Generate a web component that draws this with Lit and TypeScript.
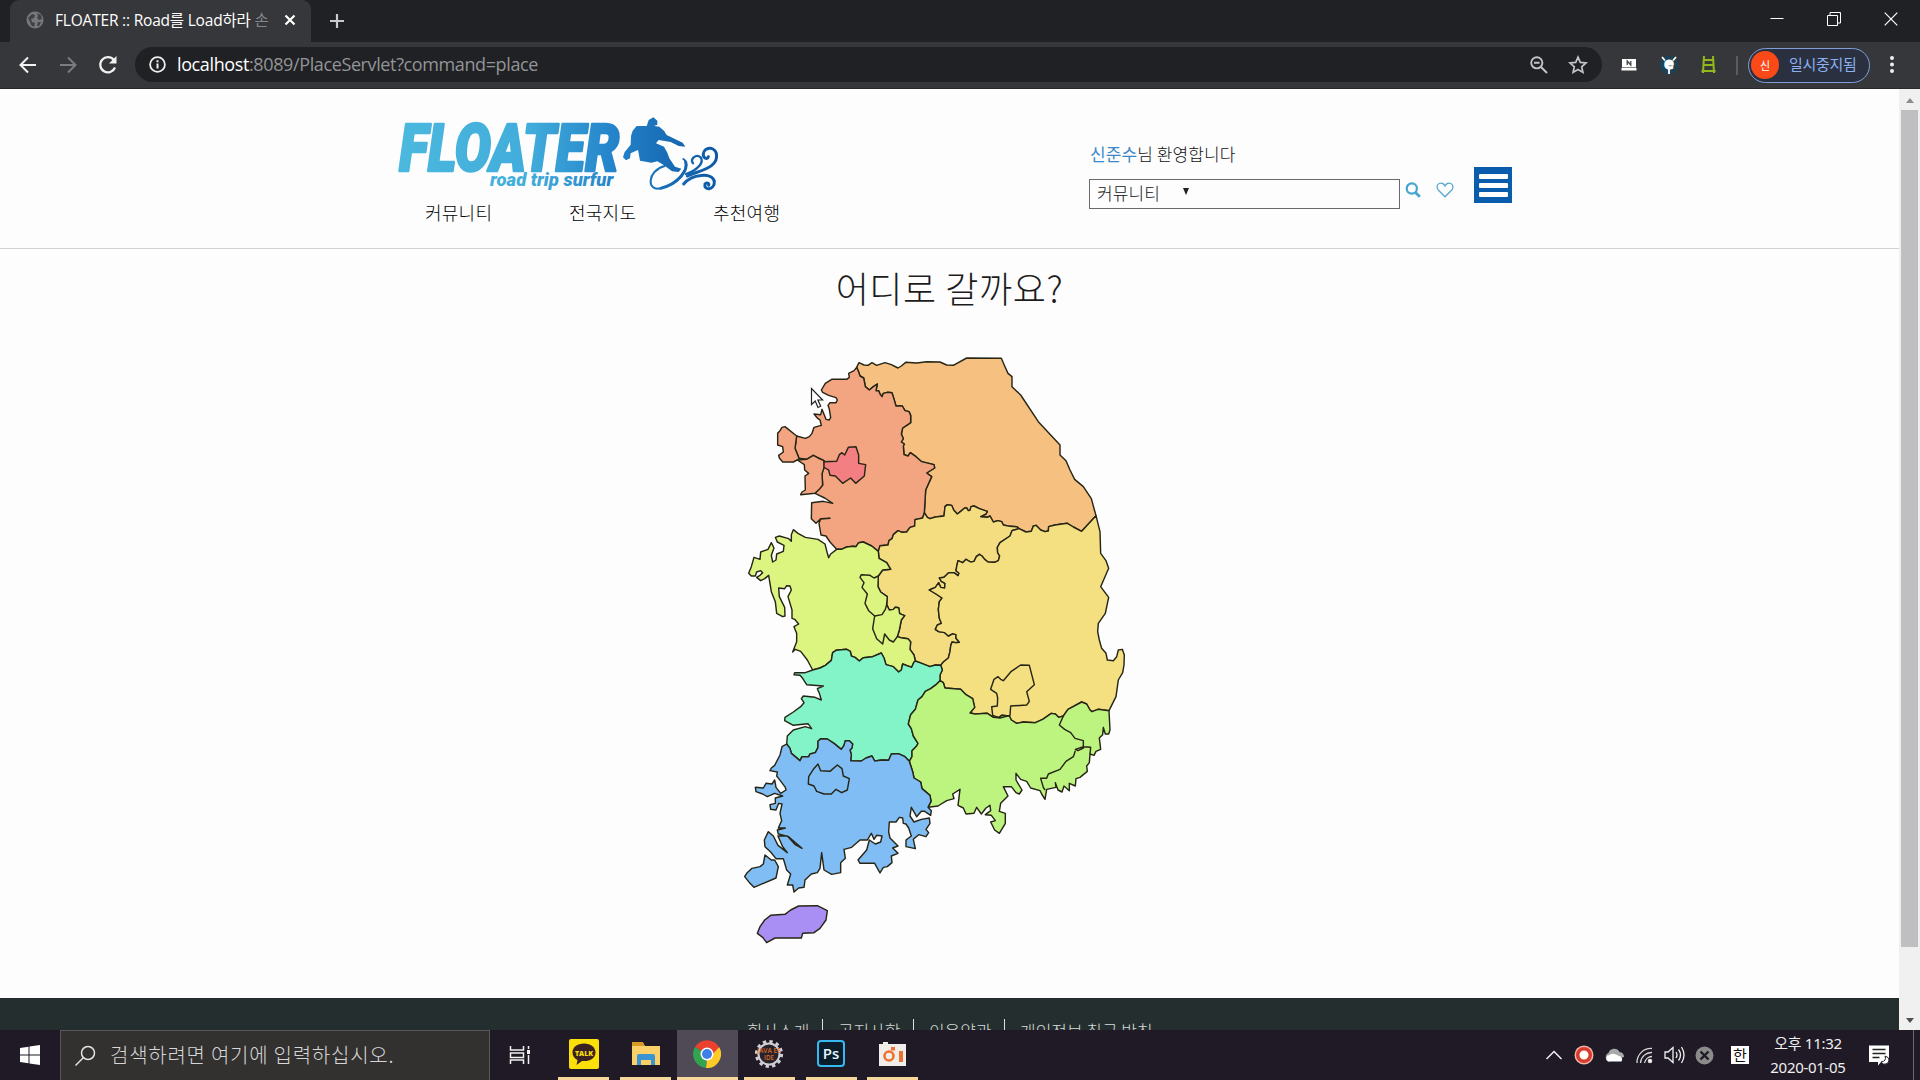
import { LitElement, html, svg, css } from "lit";
import { customElement } from "lit/decorators.js";

/* ---------- map geometry: map units are thirds of a pixel ---------- */
const flip = (s: string) => s.trim().split(/\s+/).reverse().join(" ");
const poly = (...parts: string[]) => "M" + parts.join(" ") + "Z";

// Borders shared by two provinces
const GG_GW = "583,518 587,450 605,410 590,399 614,384 612,374 575,365 558,350 541,338 534,348 522,344 520,318 523,312 514,306 520,296 514,282 518,264 530,256 542,248 542,226 537,215 525,212 517,198 498,198 494,184 486,158 472,157 460,160 456,170 450,162 446,152 438,152 442,132 430,140 418,150 406,140 401,114 390,108 386,96 380,82";
const GG_CN = "320,628 334,628 350,621 370,619 378,620 386,608 400,606 425,618 445,634";
const GG_CB = "445,634 450,617 474,615 477,602 486,596 490,584 504,572 516,577 530,576 540,562 554,558 555,539 578,534 583,518";
const GW_CB = "583,518 592,532 600,536 616,531 642,528 645,500 652,494 665,496 671,510 682,522 692,514 704,504 710,504 715,512 720,511 723,500 732,498 748,506 772,514 768,522 752,530 772,532 780,528 790,546 804,542 815,545 820,555 840,559 860,560 867,566";
const GW_GB = "867,566 888,576 904,574 910,558 918,556 932,570 945,575 955,573 956,560 975,555 1012,550 1030,561 1055,574 1098,527";
const CB_CN = "445,634 447,655 470,668 482,688 458,690 445,708 444,740 452,756 472,770 470,794 478,810 490,808 496,802 506,803 509,821 524,827 514,840 508,870 502,890 512,893 534,896 542,906 540,928 552,945 556,963";
const CB_JB = "556,963 575,970 600,980 616,975 632,976";
const CB_GB = "867,566 852,570 846,572 840,588 810,608 802,622 803,638 809,648 805,662 794,667 774,666 764,658 756,648 748,643 739,650 732,664 722,666 708,658 698,668 684,662 680,680 678,692 687,700 684,707 672,698 656,698 642,712 628,714 634,724 645,730 644,744 632,742 626,728 616,742 598,750 618,762 636,774 628,785 625,808 628,835 634,850 622,855 616,868 626,875 644,878 655,888 668,881 678,884 678,895 688,907 677,908 666,906 662,918 660,935 655,954 640,966 632,976";
const CN_JB = "248,990 270,984 286,976 304,961 308,938 318,931 350,928 361,934 364,948 375,952 388,963 400,953 428,950 454,939 462,954 468,974 490,980 506,996 514,990 518,972 545,982 552,966 556,963";
const JB_GB = "632,976 637,990 630,1005 630,1022";
const JB_GN = "630,1022 618,1034 602,1046 586,1054 576,1070 564,1080 556,1108 542,1124 535,1152 544,1166 550,1188 564,1210 560,1218 546,1232 546,1250 538,1264";
const JB_JN = "170,1212 180,1225 184,1240 210,1262 216,1250 236,1250 240,1242 256,1238 264,1222 264,1204 272,1196 292,1197 312,1210 334,1228 342,1216 346,1202 358,1202 368,1212 366,1224 360,1230 364,1244 362,1262 394,1263 408,1254 426,1248 434,1263 456,1260 476,1261 484,1242 505,1241 525,1250 538,1264";
const JN_GN = "538,1264 548,1295 552,1314 572,1326 576,1346 600,1366 603,1384 594,1402";
const GB_GN = "630,1022 640,1028 645,1044 692,1048 708,1064 728,1076 734,1102 720,1119 736,1122 772,1120 790,1132 806,1133 815,1126 838,1128 844,1140 860,1150 880,1146 916,1148 938,1138 964,1120 976,1122 986,1132 1000,1128 1014,1108 1055,1086 1070,1092 1080,1110 1086,1115 1104,1108 1137,1112";

const REGIONS = [
  { name: "강원", color: "#f5c080", d: poly(GG_GW, "387,68 402,75 414,76 426,68 440,76 465,68 484,74 504,84 514,78 527,67 560,69 590,65 630,66 650,75 670,76 710,54 814,55 824,78 834,100 846,110 846,140 872,165 925,245 990,315 990,345 1008,362 1020,390 1034,418 1060,440 1084,476 1098,527", flip(GW_GB), flip(GW_CB)) },
  { name: "경기", color: "#f3a481", d: poly("380,82 372,92 356,100 358,112 350,118 305,118 286,130 274,150 278,157 296,166 318,173 322,180 318,188 300,188 294,196 298,208 302,232 298,240 288,238 276,208 272,224 252,222 264,236 270,240 274,256 252,262 246,280 238,290 226,295 200,288 195,325 207,355 230,358 250,346 282,362 276,400 278,435 255,460 284,474 308,490 280,484 262,486 245,488 244,536 258,550 272,536 300,535 272,537 267,550 273,585 288,588 300,606 320,628", GG_CN, GG_CB, GG_GW) },
  { name: "강화", color: "#f3a481", d: poly("200,288 165,260 156,262 150,272 143,280 143,315 158,320 160,336 146,346 148,354 158,366 190,366 205,358 207,355 195,325") },
  { name: "인천", color: "#f3a481", d: poly("202,360 230,358 250,346 264,354 282,362 283,380 276,402 278,435 268,448 255,460 212,464 216,456 226,450 225,408 236,400 224,390 223,374") },
  { name: "서울", color: "#f37f82", d: poly("282,365 320,364 328,344 336,338 344,345 355,322 378,320 386,345 386,370 407,374 403,408 377,430 362,414 338,430 316,408 300,406 296,390 282,382") },
  { name: "충북", color: "#f4dc80", d: poly(GW_CB, CB_GB, flip(CB_JB), flip(CB_CN), GG_CB) },
  { name: "경북", color: "#f4e080", d: poly(GW_GB, "1110,575 1112,640 1128,662 1136,685 1112,740 1136,772 1126,820 1105,850 1103,875 1108,900 1115,925 1128,940 1132,960 1150,962 1160,950 1165,930 1177,928 1183,945 1182,975 1178,998 1165,1020 1158,1070 1137,1112", flip(GB_GN), flip(JB_GB), flip(CB_GB)) },
  { name: "충남", color: "#dcf480", d: poly(GG_CN, CB_CN, flip(CN_JB), "232,960 212,934 196,928 188,936 200,905 200,880 192,860 206,852 194,838 186,835 186,810 174,770 184,750 180,738 170,737 164,746 146,744 148,770 164,802 165,828 158,830 140,820 136,785 124,755 116,706 104,716 92,722 80,712 90,706 98,698 92,692 80,696 76,708 64,708 56,700 64,680 72,652 90,658 92,636 114,628 124,608 132,624 124,646 128,666 138,660 140,642 160,634 162,616 142,606 136,592 148,588 176,596 184,604 184,584 190,569 204,580 226,592 264,598 285,612 292,640 296,653 302,642") },
  { name: "전북", color: "#82f4c8", d: poly(CN_JB, CB_JB, JB_GB, JB_GN, flip(JB_JN), "172,1188 190,1170 226,1160 245,1166 234,1151 190,1156 164,1142 165,1132 190,1116 212,1100 222,1088 214,1076 220,1068 255,1072 274,1080 268,1060 262,1046 280,1038 230,1034 218,1015 210,1006 192,1004 194,998 226,998") },
  { name: "경남", color: "#bdf480", d: poly(GB_GN, "1140,1170 1136,1182 1126,1182 1120,1162 1118,1184 1108,1194 1112,1228 1098,1234 1092,1246 1080,1242 1078,1268 1070,1278 1072,1294 1050,1312 1038,1316 1036,1338 1018,1330 1018,1352 1002,1338 996,1356 984,1350 976,1328 978,1342 950,1348 945,1378 935,1362 930,1352 902,1344 890,1324 872,1318 858,1300 858,1320 876,1350 868,1362 858,1358 844,1340 820,1340 834,1368 812,1390 808,1414 826,1420 826,1450 808,1480 794,1470 782,1446 796,1442 784,1426 766,1424 782,1412 780,1396 768,1404 754,1422 740,1402 732,1420 708,1422 700,1404 684,1396 690,1348 668,1362 672,1376 650,1382 624,1398 594,1402", flip(JN_GN), flip(JB_GN)) },
  { name: "전남", color: "#80bdf4", d: poly(JB_JN, JN_GN, "604,1412 602,1426 584,1414 574,1414 560,1430 544,1402 540,1428 552,1446 574,1438 598,1434 600,1450 588,1468 596,1478 588,1490 566,1484 550,1498 556,1526 528,1520 528,1500 544,1488 536,1464 528,1452 520,1450 518,1434 508,1432 498,1446 478,1446 476,1476 480,1494 504,1518 488,1524 504,1540 484,1548 486,1568 472,1580 460,1582 450,1599 434,1570 390,1570 384,1560 410,1530 418,1500 436,1512 452,1506 456,1488 440,1486 432,1498 424,1480 412,1500 390,1500 365,1522 342,1528 346,1555 332,1568 332,1598 305,1603 282,1590 275,1538 270,1585 262,1598 244,1602 225,1620 222,1642 206,1644 192,1656 188,1635 172,1635 182,1602 170,1590 160,1556 138,1556 122,1536 105,1520 103,1500 115,1475 130,1488 144,1516 172,1538 158,1520 144,1488 172,1488 196,1514 216,1525 194,1506 176,1490 145,1482 142,1470 166,1464 145,1464 155,1442 150,1420 156,1392 146,1390 138,1410 122,1408 120,1394 136,1390 136,1374 158,1368 134,1360 112,1370 98,1362 78,1355 76,1342 100,1344 108,1330 126,1332 134,1320 138,1342 152,1360 168,1350 166,1342 148,1318 140,1308 142,1296 120,1292 124,1284 134,1276 150,1245 156,1220") },
  { name: "진도", color: "#80bdf4", d: poly("105,1545 124,1560 134,1560 145,1580 138,1614 72,1642 60,1630 44,1610 50,1600 66,1585 90,1580 100,1572") },
  { name: "제주", color: "#a98ff4", d: poly("82,1780 90,1760 104,1740 122,1726 165,1723 182,1710 206,1698 262,1697 292,1712 288,1740 270,1765 252,1778 218,1780 214,1794 135,1794 110,1808 98,1792") },
];
const INNER = [
  "M470,794 466,808 456,824 434,828 416,812 405,790 412,762 396,742 402,728 390,712 394,704 420,706 432,714 445,708",
  "M434,828 428,866 440,896 458,912 464,882 478,900 490,906 502,890",
  "M785,1100 788,1126 810,1134 840,1126 842,1098 890,1095 898,1084 890,1055 913,1034 898,976 872,975 844,994 820,1022 812,1018 804,1010 792,1018 782,1048 800,1060 803,1074 802,1098Z",
  "M264,1272 272,1292 300,1294 322,1275 336,1286 340,1308 358,1316 352,1350 335,1358 318,1348 304,1362 282,1362 260,1354 252,1338 235,1332 236,1310 250,1288Z",
  "M1000,1128 988,1155 1004,1168 1022,1178 1035,1195 1060,1202 1060,1224 1044,1232 1036,1228 1060,1220 1082,1222 1080,1242",
  "M1036,1232 1030,1250 1008,1264 990,1288 955,1302 950,1315 932,1315 940,1342 945,1350",
];

@customElement("korea-map")
export class KoreaMap extends LitElement {
  static styles = css`
    :host { display: block; width: 400px; height: 610px; }
    svg { display: block; }
    .line { stroke: #272616; stroke-width: 4.3; stroke-linejoin: round; }
  `;
  render() {
    return html`<svg width="400" height="610" viewBox="0 0 1200 1830">
      ${REGIONS.map((r) => svg`<path class="line" fill=${r.color} d=${r.d} aria-label=${r.name}></path>`)}
      ${INNER.map((d) => svg`<path class="line" fill="none" d=${d}></path>`)}
    </svg>`;
  }
}

@customElement("browser-bar")
export class BrowserBar extends LitElement {
  static styles = css`
    :host { display: block; height: 89px; background: #202124; color: #fff; font-family: "Noto Sans", "Noto Sans CJK KR", sans-serif; }
    svg { display: block; fill: none; flex: none; }
    .strip { display: flex; height: 42px; align-items: center; padding-left: 10px; }
    .tab { box-sizing: border-box; width: 301px; height: 42px; background: #36373a; border-radius: 9px 9px 0 0; display: flex; align-items: center; padding: 0 15px 2px 16px; }
    .title { width: 222px; margin-left: 11px; white-space: nowrap; font: 400 15.5px "Open Sans", "Noto Sans CJK KR", sans-serif; letter-spacing: -0.2px; padding-bottom: 2px; }
    .faded { color: #85868a; }
    .close { margin-left: auto; }
    .plus { margin-left: 18px; }
    .win { display: flex; margin-left: auto; gap: 43px; padding-right: 22px; align-items: center; padding-bottom: 5px; }
    .tools { display: flex; height: 47px; background: #36373a; box-sizing: border-box; border-bottom: 1px solid #28292b; align-items: center; padding: 0 19px 0 18px; }
    .nav { display: flex; gap: 20px; width: 117px; }
    .omni { width: 1467px; height: 35px; background: #202124; border-radius: 18px; display: flex; align-items: center; box-sizing: border-box; padding: 0 14px; margin-bottom: 1px; }
    .url { margin-left: 11px; font: 400 18px "Open Sans", sans-serif; color: #929497; white-space: nowrap; letter-spacing: -0.38px; padding-bottom: 1px; }
    .host { color: #fff; }
    .mag { margin-left: auto; margin-right: 19px; }
    .ext { display: flex; gap: 20px; margin-left: 17px; }
    .e { font: 800 16px "Open Sans", sans-serif; }
    .sep { width: 2px; height: 19px; background: #5b5c60; margin: 0 10px 0 17px; }
    .pill { width: 122px; height: 35px; box-sizing: border-box; border: 1.5px solid #7f9fd6; background: #2b3040; border-radius: 18px; display: flex; align-items: center; gap: 10px; padding-left: 2px; color: #8ab0f0; font-size: 15px; white-space: nowrap; letter-spacing: -0.3px; }
    .label { padding-bottom: 3px; }
    .face { width: 28px; height: 28px; border-radius: 50%; background: #fb4a18; color: #fff; font-size: 11px; display: flex; align-items: center; justify-content: center; }
    .dots { margin-left: 19px; }
  `;
  render() {
    return html`
      <div class="strip">
        <div class="tab">
          <svg width="18" height="18" viewBox="0 0 18 18"><circle cx="9" cy="9" r="8.5" fill="#77787c"/><path d="M2 7l4-4 3 1-1 3-3 1 1 3 3 1-1 4-3-2-1-3zM11 2l4 2 1 4-3 1-2-2 1-2zM12 11l3 0-2 4-2 0z" fill="#404145"/></svg>
          <div class="title">FLOATER :: Road를 Load하라 <span class="faded">손</span></div>
          <svg class="close" width="12" height="12" viewBox="0 0 12 12" stroke="#fff" stroke-width="2.2"><path d="M1.5 1.5l9 9M10.500 1.5l-9 9"/></svg>
        </div>
        <svg class="plus" width="16" height="16" viewBox="0 0 16 16" stroke="#c9cacd" stroke-width="2.2"><path d="M8 1v14M1 8h14"/></svg>
        <div class="win">
          <svg width="14" height="14" viewBox="0 0 14 14" stroke="#fff"><path d="M.5 6.500h13"/></svg>
          <svg width="14" height="14" viewBox="0 0 14 14" stroke="#fff"><path d="M.5 3.500h10v10h-10zM3 3.500v-3h10.500v10.500h-3"/></svg>
          <svg width="14" height="14" viewBox="0 0 14 14" stroke="#fff" stroke-width="1.2"><path d="M.7.7l12.600 12.600M13.300.7L.7 13.300"/></svg>
        </div>
      </div>
      <div class="tools">
        <div class="nav">
          <svg width="20" height="20" viewBox="0 0 20 20" stroke="#f2f2f2" stroke-width="2"><path d="M18 10H3M10 2.500L2.500 10l7.500 7.500"/></svg>
          <svg width="20" height="20" viewBox="0 0 20 20" stroke="#7b7c80" stroke-width="2"><path d="M2 10h15M10 2.500l7.500 7.500-7.500 7.500"/></svg>
          <svg width="20" height="20" viewBox="0 0 20 20"><path d="M17 12.500A7.600 7.600 0 1 1 15.800 5" stroke="#f2f2f2" stroke-width="2.200"/><path d="M18.500 1v7.500h-7.500z" fill="#f2f2f2"/></svg>
        </div>
        <div class="omni">
          <svg width="17" height="17" viewBox="0 0 17 17"><circle cx="8.500" cy="8.500" r="7.400" stroke="#eee" stroke-width="1.800"/><path d="M8.500 7.500v5M8.500 4.300v2" stroke="#eee" stroke-width="2"/></svg>
          <div class="url"><span class="host">localhost</span>:8089/PlaceServlet?command=place</div>
          <svg class="mag" width="20" height="20" viewBox="0 0 20 20" stroke="#c3c4c7" stroke-width="1.900"><circle cx="7.800" cy="7.800" r="5.600"/><path d="M12 12l6 6M5 7.800h5.600"/></svg>
          <svg width="20" height="20" viewBox="0 0 20 20" stroke="#c3c4c7" stroke-width="1.700"><path d="M10 2.200l2.300 5.200 5.700.6-4.300 3.800 1.200 5.600-4.900-2.900-4.900 2.900 1.200-5.600L2 8l5.700-.6z"/></svg>
        </div>
        <div class="ext">
          <svg width="20" height="20" viewBox="0 0 20 20"><path d="M3 4h14v8H3zM2.500 13h15v2.500h-15z" fill="#fff"/><path d="M3 12.500h14" stroke="#888"/><path d="M8.200 10V6l3.600 4V6" stroke="#444" stroke-width="1.300"/></svg>
          <svg width="20" height="20" viewBox="0 0 20 20"><circle cx="10" cy="10" r="9.500" fill="#1e4253"/><path d="M3 2l3 3.500M17 2l-3 3.500M10 14v5" stroke="#fff" stroke-width="1.800"/><text class="e" x="10" y="14" text-anchor="middle" fill="#fff" stroke="#fff" stroke-width=".8">e</text></svg>
          <svg width="20" height="20" viewBox="0 0 20 20" stroke="#94b81c" stroke-width="2"><path d="M5 1L4 18M14 1l1 17M4.500 5h10M4 10h11M2.500 16h14"/></svg>
        </div>
        <div class="sep"></div>
        <div class="pill"><div class="face">신</div><span class="label">일시중지됨</span></div>
        <svg class="dots" width="6" height="20" viewBox="0 0 6 20"><circle cx="3" cy="3" r="2" fill="#eee"/><circle cx="3" cy="9.500" r="2" fill="#eee"/><circle cx="3" cy="16" r="2" fill="#eee"/></svg>
      </div>`;
  }
}

@customElement("site-page")
export class SitePage extends LitElement {
  static styles = css`
    :host { display: flex; height: 941px; overflow: hidden; background: #fdfdfd; color: #222; font-family: "Noto Sans CJK KR", sans-serif; }
    svg { display: block; flex: none; overflow: visible; }
    .page { width: 1899px; flex: none; height: 941px; overflow: hidden; display: flex; flex-direction: column; }
    header { height: 160px; box-sizing: border-box; border-bottom: 1px solid #d3d3d6; display: flex; padding-left: 400px; flex: none; }
    .brand { width: 689px; padding-top: 27px; }
    nav { display: flex; padding: 8px 0 0 25px; gap: 77px; font-size: 18px; font-weight: 300; line-height: 26px; letter-spacing: 0.25px; }
    nav span { width: 67px; white-space: nowrap; color: #000; }
    .find { width: 311px; padding-top: 53px; }
    .hello { font-size: 17px; line-height: 24px; font-weight: 300; padding-left: 1px; color: #111; letter-spacing: 0.1px; }
    .hello b { font-weight: 400; color: #3c87c9; }
    .box { margin-top: 13px; box-sizing: border-box; height: 30px; border: 1px solid #68686e; display: flex; align-items: center; padding: 0 0 3px 7px; font-size: 17px; font-weight: 300; color: #111; letter-spacing: 0.1px; }
    .arrow { margin: 0 0 2px 23px; width: 0; height: 0; border: 3.5px solid transparent; border-top: 7px solid #222; border-bottom: 0; }
    .acts { display: flex; align-items: flex-start; padding: 93px 0 0 5px; gap: 15px; }
    .menu { width: 38px; height: 36px; background: #0a5cad; margin: 78px 0 0 20px; display: flex; flex-direction: column; align-items: center; justify-content: center; gap: 4px; }
    .menu i { width: 29px; height: 5px; background: #fff; border-radius: 1px; }
    main { height: 749px; display: flex; flex-direction: column; align-items: center; flex: none; }
    h1 { margin: 10px 0 0; font-size: 36px; font-weight: 300; line-height: 56px; height: 56px; color: #1c1c1c; letter-spacing: 0.6px; }
    korea-map { margin: 25px 39px 0 0; width: 400px; }
    footer { flex: none; height: 60px; background: #252e2e; color: #d8dada; display: flex; justify-content: center; padding: 21px 2px 0 0; font-size: 17px; font-weight: 300; line-height: 24px; }
    footer span { padding: 0 12.5px 0 15px; border-right: 1.5px solid #e0e0e0; height: 19px; }
    footer span:last-child { border: 0; }
    .scroll { flex: none; width: 21px; background: #f0f0f0; display: flex; flex-direction: column; align-items: center; }
    .up { margin-top: 9px; border: 4.5px solid transparent; border-bottom: 5px solid #8c8c8c; border-top: 0; }
    .thumb { width: 17px; height: 837px; background: #bfbfc1; margin-top: 7px; }
    .down { margin-top: auto; margin-bottom: 7px; border: 4.5px solid transparent; border-top: 5px solid #505050; border-bottom: 0; }
    .word { font: italic 900 202px Roboto, sans-serif; }
    .tag { font: italic 900 56px Roboto, sans-serif; }
  `;
  render() {
    return html`
      <div class="page">
        <header>
          <div class="brand">
            <svg width="320" height="75" viewBox="60 48 960 225">
              <defs>
                <linearGradient id="g" gradientUnits="userSpaceOnUse" x1="60" y1="0" x2="1020" y2="0"><stop offset="0" stop-color="#4bb8de"/><stop offset=".4" stop-color="#42addb"/><stop offset=".65" stop-color="#2686cb"/><stop offset="1" stop-color="#0c57a3"/></linearGradient>
              </defs>
              <g fill="url(#g)">
                <text class="word" x="58" y="213" textLength="660" lengthAdjust="spacingAndGlyphs" stroke="url(#g)" stroke-width="8" stroke-linejoin="round">FLOATER</text>
                <text class="tag" x="330" y="258" textLength="370" lengthAdjust="spacingAndGlyphs">road trip surfur</text>
                <path d="M803 70L806 60 820 52 832 62 832 74 822 78 838 80 852 92 860 105 908 128 916 140 896 138 872 126 836 120 828 130 852 140 862 158 868 175 885 200 904 206 896 216 876 214 850 194 832 184 814 188 780 182 774 150 752 160 750 175 738 181 729 172 734 156 752 134 753 108 758 92 770 78 800 78Z"/>
              </g>
              <g fill="none" stroke="url(#g)" stroke-linecap="round" stroke-width="6">
                <path d="M854 198C800 212 800 276 842 265C896 252 938 196 910 177" />
                <path d="M842 265C896 252 925 210 917 186" stroke-width="9"/>
                <path d="M918 222C945 214 975 190 962 172C948 160 928 178 939 190" stroke-width="7"/>
                <path d="M922 228C955 212 1018 205 1009 160C1000 134 964 144 971 170C976 178 984 176 985 170" stroke-width="9"/>
                <path d="M911 252C935 222 996 216 1003 244C1004 272 970 272 975 252C980 246 988 250 986 256" stroke-width="9"/>
              </g>
            </svg>
            <nav><span>커뮤니티</span><span>전국지도</span><span>추천여행</span></nav>
          </div>
          <div class="find">
            <div class="hello"><b>신준수</b>님 환영합니다</div>
            <div class="box">커뮤니티<div class="arrow"></div></div>
          </div>
          <div class="acts">
            <svg width="16" height="16" viewBox="0 0 16 16" fill="none" stroke="#46a5cf"><circle cx="6.800" cy="6.500" r="5.100" stroke-width="2.200"/><path d="M10.500 10.500l4.300 4.300" stroke-width="2.800"/></svg>
            <svg width="18" height="16" viewBox="0 0 18 16" fill="none" stroke="#58a8cf" stroke-width="1.300"><path d="M9 14.800L2.200 8C.2 5.500 1 2.500 3.200 1.500 5.500.600 7.800 1.600 9 4 10.200 1.600 12.500.600 14.800 1.500 17 2.500 17.800 5.500 15.800 8z"/></svg>
          </div>
          <div class="menu"><i></i><i></i><i></i></div>
        </header>
        <main>
          <h1>어디로 갈까요?</h1>
          <korea-map></korea-map>
        </main>
        <footer><span>회사소개</span><span>공지사항</span><span>이용약관</span><span>개인정보 취급 방침</span></footer>
      </div>
      <div class="scroll"><div class="up"></div><div class="thumb"></div><div class="down"></div></div>`;
  }
}

@customElement("task-bar")
export class TaskBar extends LitElement {
  static styles = css`
    :host { display: flex; height: 50px; background: #1f1a26; color: #f0f0f0; align-items: stretch; font-family: "Noto Sans", "Noto Sans CJK KR", sans-serif; }
    svg { display: block; flex: none; fill: none; }
    .start { width: 60px; display: flex; align-items: center; justify-content: center; }
    .search { width: 430px; box-sizing: border-box; background: #323130; border: 1px solid #59595b; border-bottom: 0; display: flex; align-items: center; padding-left: 13px; gap: 14px; font: 300 20px "Noto Sans CJK KR", sans-serif; color: #d6d6d6; letter-spacing: 0.75px; }
    .hint { padding-bottom: 3px; }
    .view { width: 63px; display: flex; align-items: center; justify-content: center; padding-right: 4px; box-sizing: border-box; }
    .app { width: 61.800px; display: flex; flex-direction: column; align-items: center; box-sizing: border-box; }
    .pic { height: 47px; display: flex; align-items: center; padding-bottom: 0; }
    .bar { width: 51px; height: 3px; background: #f6d79b; }
    .on { background: #504a57; }
    .on .bar { width: 100%; }
    .ps { box-sizing: border-box; width: 28px; height: 27px; border: 2px solid #36b9f0; border-radius: 4px; background: #0b1c2a; color: #e4f6ff; font: 600 15px/22px "Open Sans", sans-serif; text-align: center; }
    .tray { margin-left: auto; display: flex; align-items: center; padding-right: 5px; }
    .ic { display: flex; justify-content: center; width: 30px; }
    .han { width: 18px; height: 18px; margin: 0 20px 0 12px; background: #fff; color: #111; font: 400 15px/17px "Noto Sans CJK KR", sans-serif; text-align: center; }
    .clock { width: 78px; text-align: center; font-size: 15px; line-height: 24px; white-space: nowrap; margin-right: 22px; letter-spacing: -0.3px; padding-bottom: 1px; }
    .note { margin-right: 23px; }
    .edge { width: 1px; height: 50px; background: #6b6970; margin-right: 1px; }
  `;
  render() {
    const app = (pic: unknown, on = false) => html`<div class="app ${on ? "on" : ""}"><div class="pic">${pic}</div><div class="bar"></div></div>`;
    return html`
      <div class="start"><svg width="20" height="20" viewBox="0 0 20 20"><path d="M0 3l8.500-1.300v7.800H0zM9.500 1.500L20 0v9.500H9.500zM0 10.500h8.500v7.800L0 17zM9.500 10.500H20V20L9.500 18.500z" fill="#fff"/></svg></div>
      <div class="search"><svg width="22" height="22" viewBox="0 0 22 22" stroke="#e4e4e4" stroke-width="1.500"><circle cx="14" cy="8" r="6.500"/><path d="M9.500 12.500L1.500 20.500"/></svg><span class="hint">검색하려면 여기에 입력하십시오.</span></div>
      <div class="view"><svg width="22" height="20" viewBox="0 0 22 20" stroke="#f0f0f0" stroke-width="1.500"><path d="M1.500 1v4h13V1M1.500 19v-4h13v4M1.500 8h13v4.500h-13zM19.500 1v3M19.500 10v9"/><path d="M19.500 5v4" stroke-width="3"/></svg></div>
      ${app(html`<svg width="30" height="30" viewBox="0 0 30 30"><rect width="30" height="30" rx="2" fill="#fbdf08"/><path d="M15 4.500c-6.800 0-11.500 3.800-11.500 9 0 3.500 2 6 5 7.500L7.500 26l5.500-4c8 .8 13.500-3 13.500-8.500 0-5.200-4.700-9-11.500-9z" fill="#3a2222"/><text x="15" y="16.500" text-anchor="middle" font-family="Open Sans" font-weight="800" font-size="7" fill="#fbdf08">TALK</text></svg>`)}
      ${app(html`<svg width="28" height="24" viewBox="0 0 28 24"><path d="M0 1h11l2 3h15v19H0z" fill="#fbd069"/><path d="M0 0h11l1.500 4H0z" fill="#d99a25"/><path d="M5 23V14q0-2 2-2h14q2 0 2 2v9h-4v-5h-10v5z" fill="#3a94d4"/></svg>`)}
      ${app(html`<svg width="28" height="28" viewBox="0 0 28 28"><path d="M14 14L2 7A14 14 0 0 1 26.100 7z" fill="#ea4030"/><path d="M14 14L26.100 7A14 14 0 0 1 13 28z" fill="#fdcc2b"/><path d="M14 14L13 28A14 14 0 0 1 1.900 7z" fill="#32a350"/><path d="M14 7h12.100L20 14z" fill="#ea4030"/><circle cx="14" cy="14" r="6.500" fill="#fff"/><circle cx="14" cy="14" r="5" fill="#3f7fe8"/></svg>`, true)}
      ${app(html`<svg width="30" height="30" viewBox="0 0 30 30"><circle cx="15" cy="15" r="12.600" stroke="#d0d0d4" stroke-width="3" stroke-dasharray="3.300 3.300"/><circle cx="15" cy="15" r="10.500" stroke="#d0d0d4" stroke-width="2" fill="#28222b"/><text x="3" y="13.500" textLength="24" lengthAdjust="spacingAndGlyphs" font-family="Open Sans" font-weight="600" font-size="6.500" fill="#d96a28">JAVA EE</text><text x="10" y="20.500" textLength="10" lengthAdjust="spacingAndGlyphs" font-family="Open Sans" font-weight="600" font-size="7" fill="#d96a28">IDE</text></svg>`)}
      ${app(html`<div class="ps">Ps</div>`)}
      ${app(html`<svg width="27" height="24" viewBox="0 0 27 24"><path d="M0 2h4V0h5v2h18v22H0z" fill="#f1edeb"/><circle cx="10" cy="14" r="4.500" stroke="#ee7130" stroke-width="2.600"/><path d="M12 5h4v3.500h-4z" fill="#ee7130"/><path d="M20 9h4v11h-4z" fill="#ee7130"/></svg>`)}
      <div class="tray">
        <div class="ic"><svg width="18" height="10" viewBox="0 0 18 10" stroke="#f0f0f0" stroke-width="1.500"><path d="M1.500 9L9 1.500 16.500 9"/></svg></div>
        <div class="ic"><svg width="20" height="20" viewBox="0 0 20 20"><circle cx="10" cy="10" r="9.500" fill="#f0b6ae"/><circle cx="10" cy="10" r="6.300" fill="#fff" stroke="#da3c2c" stroke-width="3.600"/></svg></div>
        <div class="ic"><svg width="21" height="14" viewBox="0 0 21 14"><path d="M5 13.500a4.500 4.500 0 0 1-.5-8.500A6 6 0 0 1 15.500 4 5 5 0 0 1 20 9z" fill="#a9a9aa"/><path d="M4 13.500a3.500 3.500 0 0 1 1.500-6.500 6 6 0 0 1 6.500-.5l3 1.500a3.500 3.500 0 0 1 2.500 5.500z" fill="#fff"/></svg></div>
        <div class="ic"><svg width="17" height="17" viewBox="0 0 17 17" stroke="#d8d8d8" stroke-width="1.300"><path d="M1 16A14 14 0 0 1 16 1.500M4.500 16A11 11 0 0 1 16 5.500M8.500 16A8 8 0 0 1 16 9.500"/><circle cx="14" cy="14" r="1.700" fill="#fff"/></svg></div>
        <div class="ic"><svg width="21" height="18" viewBox="0 0 21 18" stroke="#f0f0f0" stroke-width="1.300"><path d="M1 6h3l5-4.500v15L4 12H1zM12 6q2 3 0 6M14.500 3.500q4 5.500 0 11M17.500 1q5 8 0 16"/></svg></div>
        <div class="ic"><svg width="19" height="19" viewBox="0 0 19 19"><circle cx="9.500" cy="9.500" r="9" fill="#8b8b89"/><path d="M5.500 5.500l8 8M13.500 5.500l-8 8" stroke="#1f1a26" stroke-width="2.400"/></svg></div>
        <div class="han">한</div>
        <div class="clock">오후 11:32<br>2020-01-05</div>
        <svg class="note" width="21" height="21" viewBox="0 0 21 21"><path d="M0 .5h20V17h-8l-3 3.500V17H0z" fill="#fff"/><path d="M3.500 4.500h13M3.500 8.500h13M3.500 12.500h7" stroke="#222" stroke-width="1.300"/><path d="M16 11q2 5-4 6 2 3 5 2t3-4-4-4z" fill="#fff" stroke="#222"/></svg>
        <div class="edge"></div>
      </div>`;
  }
}

@customElement("app-root")
export class AppRoot extends LitElement {
  static styles = css`
    :host { display: block; position: relative; width: 1920px; height: 1080px; overflow: hidden; }
    .cursor { position: absolute; left: 810px; top: 387px; }
  `;
  render() {
    return html`<browser-bar></browser-bar><site-page></site-page><task-bar></task-bar>
      <svg class="cursor" width="14" height="22" viewBox="0 0 14 22"><path d="M1.500 1.500v16l3.700-3.500 2.800 6.500 2.700-1.200-2.800-6.300h4.800z" fill="#fff" stroke="#222" stroke-width="1.200"/></svg>`;
  }
}
